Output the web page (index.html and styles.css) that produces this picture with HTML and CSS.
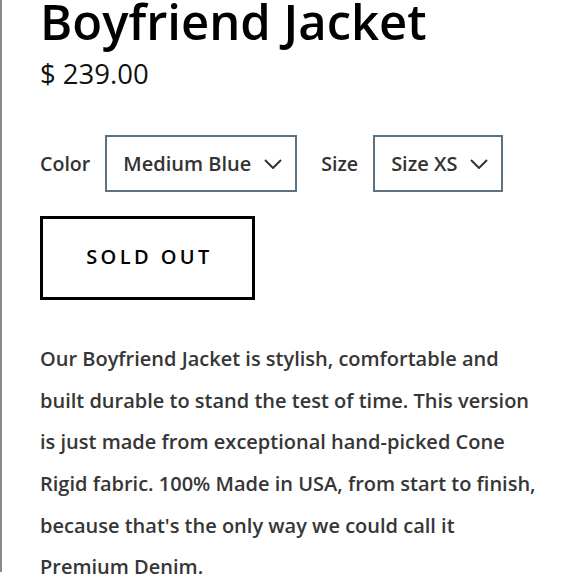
FILE: index.html
```html
<!DOCTYPE html>
<html>
<head>
<meta charset="utf-8">
<link rel="stylesheet" href="styles.css">
</head>
<body>
<div class="page">
  <h1 class="title">Boyfriend Jacket</h1>
  <div class="price">$ 239.00</div>
  <div class="options">
    <label class="opt-label">Color</label>
    <div class="select">
      <span>Medium Blue</span>
      <svg class="chev" width="18" height="10" viewBox="0 0 18 10"><path d="M1 1 L9 9 L17 1" fill="none" stroke="#333" stroke-width="2"/></svg>
    </div>
    <label class="opt-label">Size</label>
    <div class="select">
      <span>Size XS</span>
      <svg class="chev" width="18" height="10" viewBox="0 0 18 10"><path d="M1 1 L9 9 L17 1" fill="none" stroke="#333" stroke-width="2"/></svg>
    </div>
  </div>
  <div class="btn">SOLD OUT</div>
  <p class="desc">Our Boyfriend Jacket is stylish, comfortable and built durable to stand the test of time. This version is just made from exceptional hand-picked Cone Rigid fabric. 100% Made in USA, from start to finish, because that's the only way we could call it Premium Denim.</p>
</div>
</body>
</html>
```
FILE: styles.css
```css
html, body {
  margin: 0;
  padding: 0;
  background: #fff;
  overflow: hidden;
}
body {
  font-family: "Open Sans", "Noto Sans", sans-serif;
  width: 580px;
  height: 580px;
}
.page {
  border-left: 2px solid #8a8a8a;
  padding-left: 38px;
  height: 580px;
  box-sizing: border-box;
}
.title {
  margin: -8px 0 0 0;
  font-size: 49px;
  line-height: 1.2;
  font-weight: 600;
  color: #000;
  white-space: nowrap;
}
.price {
  margin-top: 5px;
  font-size: 27.5px;
  line-height: 36px;
  font-weight: 400;
  color: #111;
}
.options {
  display: flex;
  align-items: center;
  margin-top: 43px;
}
.opt-label {
  font-size: 19.6px;
  font-weight: 600;
  color: #333;
  margin-right: 15px;
}
.select {
  display: flex;
  align-items: center;
  gap: 13px;
  height: 57px;
  box-sizing: border-box;
  border: 2px solid #5b7185;
  padding: 0 13px 0 16px;
  font-size: 20px;
  font-weight: 600;
  color: #333;
  margin-right: 24px;
  white-space: nowrap;
}
.chev { margin-top: 2px; flex: none; }
.btn {
  margin-top: 24px;
  width: 215px;
  height: 84px;
  box-sizing: border-box;
  border: 3px solid #000;
  display: flex;
  align-items: center;
  justify-content: center;
  font-size: 20px;
  font-weight: 600;
  letter-spacing: 3.4px;
  color: #000;
  padding-left: 4px;
  padding-bottom: 2px;
}
.desc {
  margin: 38px 0 0 0;
  font-size: 20px;
  line-height: 41.7px;
  font-weight: 600;
  color: #363636;
  width: 502px;
}
```
